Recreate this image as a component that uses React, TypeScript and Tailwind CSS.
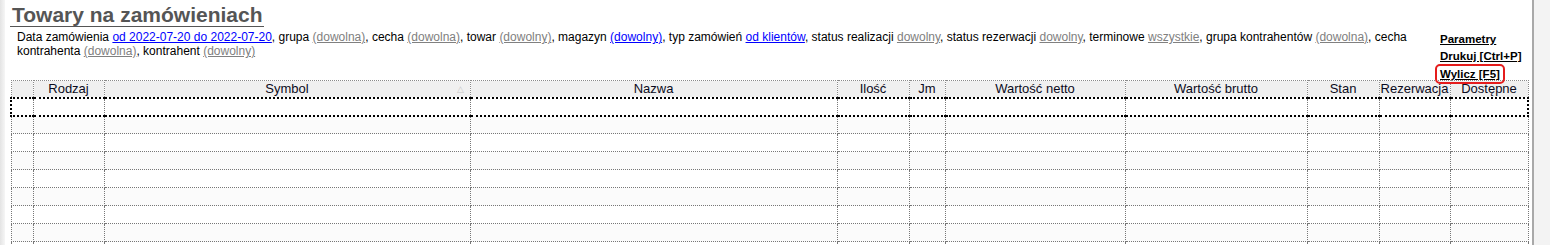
import React from "react";

const cols = [
  { w: 22, label: "" },
  { w: 71, label: "Rodzaj" },
  { w: 366, label: "Symbol", sort: true },
  { w: 367, label: "Nazwa" },
  { w: 72, label: "Ilość" },
  { w: 36, label: "Jm" },
  { w: 180, label: "Wartość netto" },
  { w: 182, label: "Wartość brutto" },
  { w: 72, label: "Stan" },
  { w: 71, label: "Rezerwacja" },
  { w: 78, label: "Dostępne" },
];

const rows = Array.from({ length: 9 }, (_, i) => i);

function Gray({ children }: { children: React.ReactNode }) {
  return <span className="text-[#808080] underline">{children}</span>;
}

function Blue({ children }: { children: React.ReactNode }) {
  return <span className="text-[#0000ff] underline">{children}</span>;
}

export default function App() {
  return (
    <div className="flex h-[245px] w-[1550px] overflow-hidden bg-white font-['Liberation_Sans',Arial,sans-serif] text-black">
      <div className="w-[5px] shrink-0 bg-gradient-to-r from-[#e4e4e4] to-[#f6f6f6]" />

      <div className="w-[1527px] shrink-0 pl-[5px] pt-[4px]">
        <h1 className="inline-block border-b border-[#555] pl-[2px] pr-[1px] text-[21px] font-bold leading-[22px] text-[#555]">
          Towary na zamówieniach
        </h1>

        {/* nagłówek: opis filtrów + linki */}
        <div className="flex h-[51px]">
          <div className="w-[1430px] pl-[7px] pt-[1px] text-[12px] leading-[14px]">
            Data zamówienia <Blue>od 2022-07-20 do 2022-07-20</Blue>, grupa <Gray>(dowolna)</Gray>, cecha{" "}
            <Gray>(dowolna)</Gray>, towar <Gray>(dowolny)</Gray>, magazyn <Blue>(dowolny)</Blue>, typ zamówień{" "}
            <Blue>od klientów</Blue>, status realizacji <Gray>dowolny</Gray>, status rezerwacji <Gray>dowolny</Gray>,
            terminowe <Gray>wszystkie</Gray>, grupa kontrahentów <Gray>(dowolna)</Gray>, cecha kontrahenta{" "}
            <Gray>(dowolna)</Gray>, kontrahent <Gray>(dowolny)</Gray>
          </div>
          <div className="flex flex-col pt-[2px] text-[11.5px] font-bold leading-[17px]">
            <span className="underline">Parametry</span>
            <span className="underline">Drukuj [Ctrl+P]</span>
            <span className="-ml-[5px] mt-[-1px] w-fit rounded-[5px] border-2 border-[#e51c1c] px-[3px] leading-[16px]">
              <span className="underline">Wylicz [F5]</span>
            </span>
          </div>
        </div>

        <table className="table-fixed border-collapse text-[13px]">
          <colgroup>
            {cols.map((c, i) => (
              <col key={i} style={{ width: c.w }} />
            ))}
          </colgroup>
          <thead>
            <tr className="h-[17px] bg-[#f0f0f0]">
              {cols.map((c, i) => (
                <th
                  key={i}
                  className="relative border border-dotted border-[#8a8a8a] p-0 text-center font-normal leading-[15px] text-[#0a0a20]"
                >
                  {c.label}
                  {c.sort && (
                    <span className="absolute right-[6px] top-[1px] text-[9px] text-[#c8c8c8]">△</span>
                  )}
                </th>
              ))}
            </tr>
          </thead>
          <tbody>
            {rows.map((r) => (
              <tr key={r} className={`h-[18px] ${r % 2 === 1 ? "bg-[#fbfbfb]" : "bg-white"}`}>
                {cols.map((_, i) => (
                  <td
                    key={i}
                    className={`border border-dotted p-0 ${
                      r === 0
                        ? `border-y-2 border-y-black border-x-[#777] ${i === 0 ? "border-l-2 border-l-black" : ""} ${
                            i === cols.length - 1 ? "border-r-2 border-r-black" : ""
                          }`
                        : "border-[#777]"
                    }`}
                  />
                ))}
              </tr>
            ))}
          </tbody>
        </table>
      </div>

      <div className="flex-1 border-l-2 border-[#a9a9a9] bg-[#f3f3f3]" />
    </div>
  );
}
